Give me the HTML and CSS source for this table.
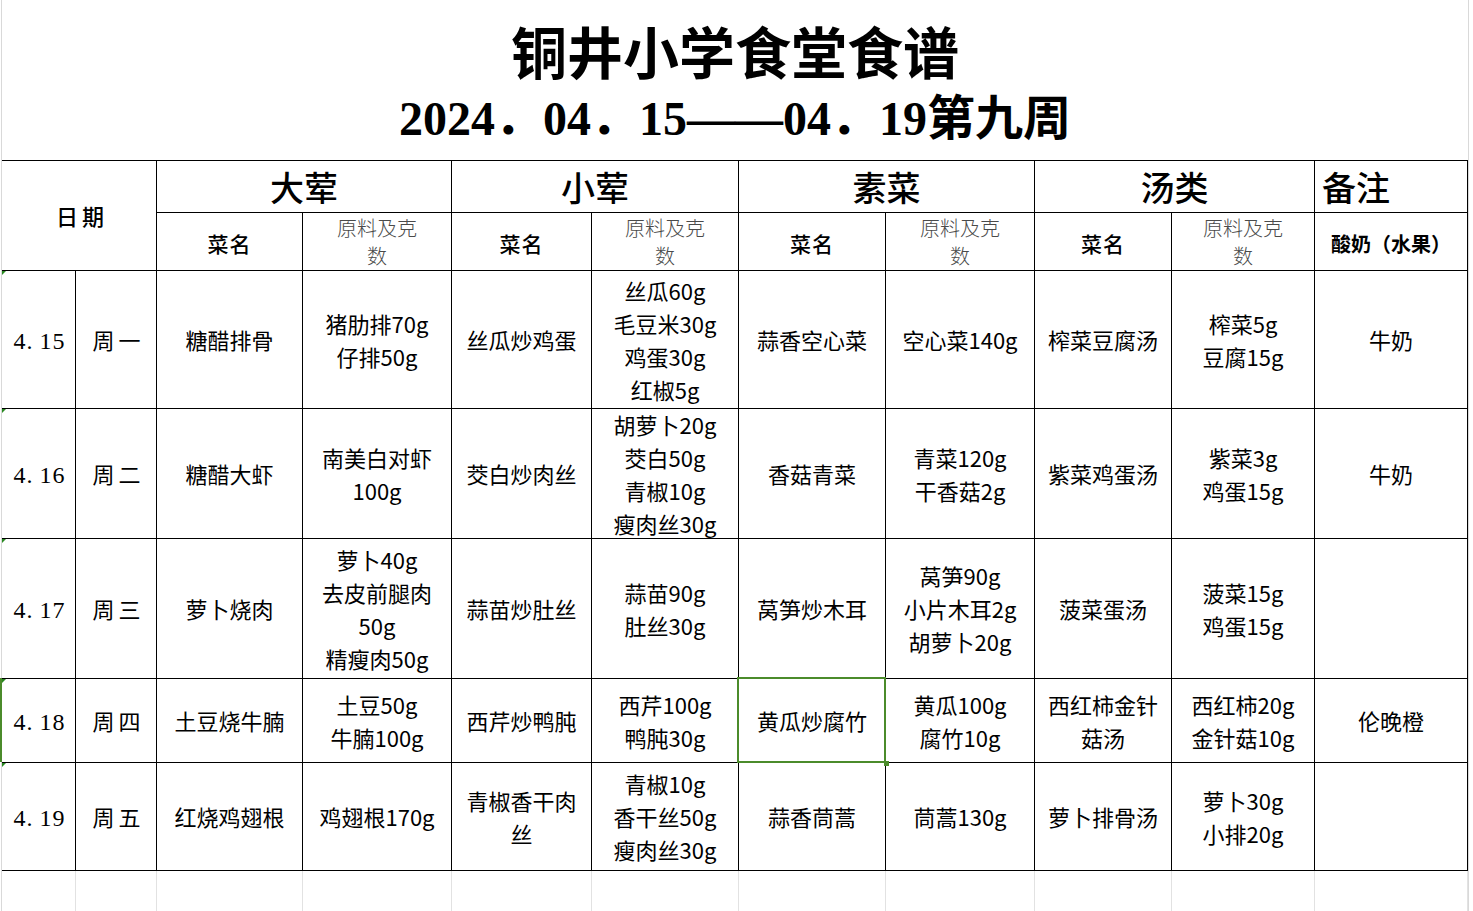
FILE: index.html
```html
<!DOCTYPE html>
<html lang="zh-CN">
<head>
<meta charset="utf-8">
<title>铜井小学食堂食谱</title>
<link rel="stylesheet" href="styles.css">
</head>
<body>
<div class="sheet">
  <div class="title">
    <div class="t1">铜井小学食堂食谱</div>
    <div class="t2">2024．04．15——04．19第九周</div>
  </div>
  <div class="grid">
    <div class="cell h-date">日期</div>
    <div class="cell h-group span2">大荤</div>
    <div class="cell h-group span2">小荤</div>
    <div class="cell h-group span2">素菜</div>
    <div class="cell h-group span2">汤类</div>
    <div class="cell h-group h-note">备注</div>

    <div class="cell h-sub">菜名</div>
    <div class="cell h-mat">原料及克<br>数</div>
    <div class="cell h-sub">菜名</div>
    <div class="cell h-mat">原料及克<br>数</div>
    <div class="cell h-sub">菜名</div>
    <div class="cell h-mat">原料及克<br>数</div>
    <div class="cell h-sub">菜名</div>
    <div class="cell h-mat">原料及克<br>数</div>
    <div class="cell h-sub h-yog">酸奶（水果）</div>

    <div class="cell date tri">4<span class="dot">.</span>15</div>
    <div class="cell day">周一</div>
    <div class="cell">糖醋排骨</div>
    <div class="cell">猪肋排70g<br>仔排50g</div>
    <div class="cell">丝瓜炒鸡蛋</div>
    <div class="cell">丝瓜60g<br>毛豆米30g<br>鸡蛋30g<br>红椒5g</div>
    <div class="cell">蒜香空心菜</div>
    <div class="cell">空心菜140g</div>
    <div class="cell">榨菜豆腐汤</div>
    <div class="cell">榨菜5g<br>豆腐15g</div>
    <div class="cell">牛奶</div>

    <div class="cell date tri">4<span class="dot">.</span>16</div>
    <div class="cell day">周二</div>
    <div class="cell">糖醋大虾</div>
    <div class="cell">南美白对虾100g</div>
    <div class="cell">茭白炒肉丝</div>
    <div class="cell">胡萝卜20g<br>茭白50g<br>青椒10g<br>瘦肉丝30g</div>
    <div class="cell">香菇青菜</div>
    <div class="cell">青菜120g<br>干香菇2g</div>
    <div class="cell">紫菜鸡蛋汤</div>
    <div class="cell">紫菜3g<br>鸡蛋15g</div>
    <div class="cell">牛奶</div>

    <div class="cell date tri">4<span class="dot">.</span>17</div>
    <div class="cell day">周三</div>
    <div class="cell">萝卜烧肉</div>
    <div class="cell">萝卜40g<br>去皮前腿肉50g<br>精瘦肉50g</div>
    <div class="cell">蒜苗炒肚丝</div>
    <div class="cell">蒜苗90g<br>肚丝30g</div>
    <div class="cell">莴笋炒木耳</div>
    <div class="cell">莴笋90g<br>小片木耳2g<br>胡萝卜20g</div>
    <div class="cell">菠菜蛋汤</div>
    <div class="cell">菠菜15g<br>鸡蛋15g</div>
    <div class="cell"></div>

    <div class="cell date tri rowmark">4<span class="dot">.</span>18</div>
    <div class="cell day">周四</div>
    <div class="cell">土豆烧牛腩</div>
    <div class="cell">土豆50g<br>牛腩100g</div>
    <div class="cell">西芹炒鸭肫</div>
    <div class="cell">西芹100g<br>鸭肫30g</div>
    <div class="cell sel">黄瓜炒腐竹</div>
    <div class="cell">黄瓜100g<br>腐竹10g</div>
    <div class="cell">西红柿金针菇汤</div>
    <div class="cell">西红柿20g<br>金针菇10g</div>
    <div class="cell">伦晚橙</div>

    <div class="cell date tri">4<span class="dot">.</span>19</div>
    <div class="cell day">周五</div>
    <div class="cell">红烧鸡翅根</div>
    <div class="cell">鸡翅根170g</div>
    <div class="cell">青椒香干肉丝</div>
    <div class="cell">青椒10g<br>香干丝50g<br>瘦肉丝30g</div>
    <div class="cell">蒜香茼蒿</div>
    <div class="cell">茼蒿130g</div>
    <div class="cell">萝卜排骨汤</div>
    <div class="cell">萝卜30g<br>小排20g</div>
    <div class="cell"></div>

    <div class="blank"></div><div class="blank"></div><div class="blank"></div><div class="blank"></div>
    <div class="blank"></div><div class="blank"></div><div class="blank"></div><div class="blank"></div>
    <div class="blank"></div><div class="blank"></div><div class="blank"></div>
  </div>
</div>
</body>
</html>
```

FILE: styles.css
```css
html, body {
  margin: 0;
  padding: 0;
  background: #fff;
}
body {
  font-family: "Noto Sans CJK SC", "Noto Sans", sans-serif;
  color: #000;
  overflow: hidden;
}
.sheet {
  margin-left: 1px;
  width: 1466px;
  border-left: 1px solid #d9d9d9;
  border-right: 1px solid #d9d9d9;
  min-height: 911px;
}
.title {
  height: 160px;
  box-sizing: border-box;
  padding-top: 17px;
  text-align: center;
}
.t1 {
  font-size: 56px;
  line-height: 66px;
  font-weight: 700;
  font-family: "Noto Sans CJK SC", sans-serif;
}
.t2 {
  font-size: 48px;
  line-height: 72px;
  font-weight: 700;
  font-family: "Liberation Serif", "Noto Sans CJK SC", serif;
}
.grid {
  display: grid;
  grid-template-columns: 74px 81px 146px 149px 140px 147px 147px 149px 137px 143px 153px;
  grid-template-rows: 52px 58px 138px 130px 140px 84px 108px 60px;
  border-top: 1px solid #000;
}
.cell {
  position: relative;
  box-sizing: border-box;
  border-right: 1px solid #000;
  border-bottom: 1px solid #000;
  display: flex;
  align-items: center;
  justify-content: center;
  text-align: center;
  padding: 0 6px;
  font-size: 22px;
  line-height: 33px;
  min-width: 0;
  min-height: 0;
}
.blank {
  box-sizing: border-box;
  border-right: 1px solid #e2e2e2;
}
.h-date {
  grid-column: 1 / span 2;
  grid-row: 1 / span 2;
  font-size: 22px;
  letter-spacing: 4px;
  padding-left: 12px;
  font-weight: 500;
}
.span2 {
  grid-column: span 2;
}
.h-group {
  font-size: 34px;
  line-height: 40px;
  padding-top: 1px;
  font-weight: 500;
}
.h-note {
  justify-content: flex-start;
  padding-left: 7px;
}
.h-sub {
  font-size: 21px;
  font-weight: 500;
  padding-top: 3px;
  letter-spacing: 1px;
}
.h-mat {
  font-size: 20px;
  line-height: 28px;
  color: #4a4a4a;
  font-weight: 300;
  padding-top: 1px;
}
.h-yog {
  font-size: 20px;
  font-weight: 700;
  letter-spacing: 0;
}
.date {
  font-family: "Liberation Serif", "Noto Sans CJK SC", serif;
  font-size: 24px;
  letter-spacing: 1px;
  padding: 3px 0 0 2px;
}
.dot {
  margin-right: 6px;
}
.day {
  letter-spacing: 4px;
  padding: 0 0 0 5px;
}
.tri::after {
  content: "";
  position: absolute;
  left: 0;
  top: 0;
  width: 0;
  height: 0;
  border-style: solid;
  border-width: 4px 4px 0 0;
  border-color: #2a8a22 transparent transparent transparent;
}
.rowmark::before {
  content: "";
  position: absolute;
  left: -2px;
  top: -1px;
  bottom: 0;
  width: 2px;
  background: #4b8b2b;
}
.sel::after {
  content: "";
  position: absolute;
  left: -2px;
  top: -2px;
  right: -1px;
  bottom: -1px;
  border: 2px solid #4b8b2b;
}
.sel::before {
  content: "";
  position: absolute;
  right: -4px;
  bottom: -4px;
  width: 5px;
  height: 5px;
  background: #4b8b2b;
  z-index: 2;
}
```
